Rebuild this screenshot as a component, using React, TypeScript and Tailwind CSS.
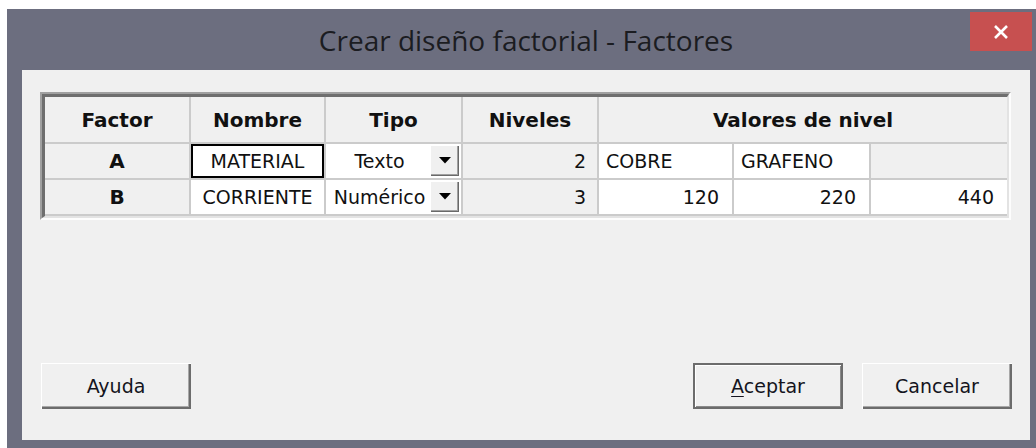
import React from "react";

type Row = {
  factor: string;
  nombre: string;
  tipo: string;
  niveles: number;
  valores: { text: string; align: "left" | "right" }[];
  selected?: boolean;
};

const rows: Row[] = [
  {
    factor: "A",
    nombre: "MATERIAL",
    tipo: "Texto",
    niveles: 2,
    valores: [
      { text: "COBRE", align: "left" },
      { text: "GRAFENO", align: "left" },
    ],
    selected: true,
  },
  {
    factor: "B",
    nombre: "CORRIENTE",
    tipo: "Numérico",
    niveles: 3,
    valores: [
      { text: "120", align: "right" },
      { text: "220", align: "right" },
      { text: "440", align: "right" },
    ],
  },
];

function cx(...c: string[]) {
  return c.filter(Boolean).join(" ");
}

const HeaderCell = ({ children, className = "" }: { children: React.ReactNode; className?: string }) => (
  <div className={`bg-[#f0f0f0] flex items-center justify-center font-bold text-[20px] text-[#111] ${className}`}>
    {children}
  </div>
);

// little combo arrow button inside the Tipo cells
const DropButton = () => (
  <div className="w-[29px] h-[31px] mt-px mr-[2px] self-start bg-[#f0f0f0] flex items-center justify-center shadow-[inset_1px_1px_#ffffff,inset_-1px_-1px_#696969,inset_-2px_-2px_#a0a0a0]">
    <svg width="12" height="7" viewBox="0 0 12 7">
      <path d="M0 0 H12 L6 6.5 Z" fill="#000" />
    </svg>
  </div>
);

const WinButton = ({ label, underline, isDefault }: { label: string; underline?: boolean; isDefault?: boolean }) => (
  <button
    className={cx(
      "w-[150px] h-[46px] bg-[#f0f0f0] text-[19px] text-[#141420] flex items-center justify-center",
      isDefault
        ? "border-2 border-[#6c6c6c] shadow-[inset_1px_1px_#ffffff,inset_-1px_-1px_#8a8a8a]"
        : "shadow-[inset_1px_1px_#ffffff,inset_-2px_-2px_#6c6c6c,inset_-3px_-3px_#a8a8a8]"
    )}
  >
    {underline ? (
      <span>
        <span className="underline underline-offset-[3px]">{label[0]}</span>
        {label.slice(1)}
      </span>
    ) : (
      label
    )}
  </button>
);

export default function App() {
  return (
    <div className="w-[1036px] h-[448px] overflow-hidden bg-white pl-[7px] pt-[9px] font-['DejaVu_Sans',sans-serif]">
      {/* window frame */}
      <div className="w-[1038px] h-[446px] bg-[#6c6e7f] flex flex-col">
        {/* caption */}
        <div className="h-[61px] flex shrink-0">
          <div className="w-[75px]" />
          <div className="flex-1 text-center pt-[13px] text-[28px] leading-[36px] text-[#1b1c21] font-['Open_Sans',sans-serif]">
            Crear diseño factorial - Factores
          </div>
          <div className="w-[75px] pt-[3px]">
            <div className="w-[62px] h-[39px] bg-[#c75050] flex items-center justify-center">
              <svg width="16" height="14" viewBox="0 0 16 14">
                <path d="M2 1 L14 13 M14 1 L2 13" stroke="#fff" strokeWidth="2.6" />
              </svg>
            </div>
          </div>
        </div>

        {/* client area */}
        <div className="mx-[15px] h-[370px] bg-[#f0f0f0] flex flex-col pt-[22px] px-[18px] pb-[31px]">
          {/* factor grid, sunken border */}
          <div className="w-fit border-t-2 border-l-2 border-[#a0a0a0] border-r-2 border-b-2 border-r-[#fdfdfd] border-b-[#fdfdfd]">
            <div className="border-t-[3px] border-l-[3px] border-[#6e6e6e] border-r-2 border-b-2 border-r-[#e3e3e3] border-b-[#e3e3e3]">
              <div className="grid grid-cols-[144px_133px_135px_134px_133px_135px_136px] grid-rows-[45px_34px_34px] gap-[2px] pb-[2px] bg-[#cbcbcb] text-[19px] text-[#111]">
                <HeaderCell>Factor</HeaderCell>
                <HeaderCell>Nombre</HeaderCell>
                <HeaderCell>Tipo</HeaderCell>
                <HeaderCell>Niveles</HeaderCell>
                <HeaderCell className="col-span-3">Valores de nivel</HeaderCell>

                {rows.map((r) => (
                  <React.Fragment key={r.factor}>
                    <div className="bg-[#f0f0f0] flex items-center justify-center font-bold text-[20px]">{r.factor}</div>
                    <div className={cx("bg-white flex items-center justify-center", r.selected ? "border-2 border-black" : "")}>
                      {r.nombre}
                    </div>
                    <div className="bg-white flex items-center">
                      <span className="flex-1 text-center pl-[3px]">{r.tipo}</span>
                      <DropButton />
                    </div>
                    <div className="bg-[#f0f0f0] flex items-center justify-end pr-[11px]">{r.niveles}</div>
                    {[0, 1, 2].map((i) => {
                      const v = r.valores[i];
                      if (!v) return <div key={i} className="bg-[#f0f0f0]" />;
                      return (
                        <div
                          key={i}
                          className={cx(
                            "bg-white flex items-center",
                            v.align === "left" ? "justify-start pl-[7px]" : "justify-end pr-[13px]"
                          )}
                        >
                          {v.text}
                        </div>
                      );
                    })}
                  </React.Fragment>
                ))}
              </div>
            </div>
          </div>

          <div className="flex-1" />

          {/* dialog buttons */}
          <div className="flex items-center justify-between pl-px">
            <WinButton label="Ayuda" />
            <div className="flex gap-[19px]">
              <WinButton label="Aceptar" underline isDefault />
              <WinButton label="Cancelar" />
            </div>
          </div>
        </div>
      </div>
    </div>
  );
}
